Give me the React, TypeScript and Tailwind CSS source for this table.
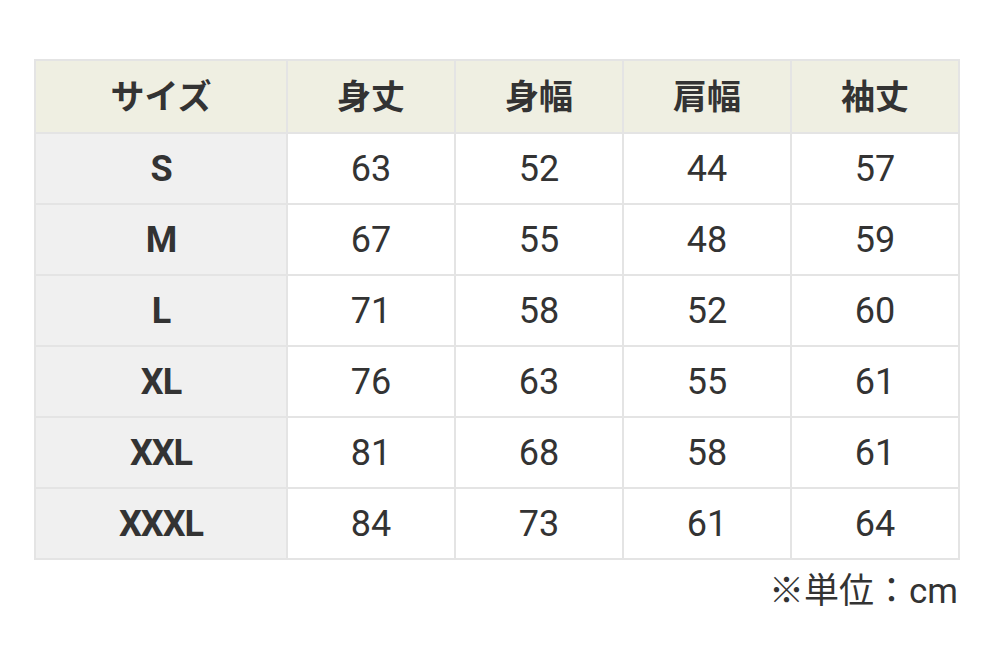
const headers = ['身丈', '身幅', '肩幅', '袖丈']

const rows: { size: string; values: number[] }[] = [
  { size: 'S', values: [63, 52, 44, 57] },
  { size: 'M', values: [67, 55, 48, 59] },
  { size: 'L', values: [71, 58, 52, 60] },
  { size: 'XL', values: [76, 63, 55, 61] },
  { size: 'XXL', values: [81, 68, 58, 61] },
  { size: 'XXXL', values: [84, 73, 61, 64] },
]

export default function App() {
  return (
    <div
      className="w-[992px] h-[653px] bg-white text-[#333333] pt-[59px] pl-[34px]"
      style={{ fontFamily: 'Roboto, "Noto Sans CJK JP", sans-serif' }}
    >
      <table className="w-[924px] border-collapse table-fixed">
        <colgroup>
          <col className="w-[252px]" />
          <col className="w-[168px]" />
          <col className="w-[168px]" />
          <col className="w-[168px]" />
          <col className="w-[168px]" />
        </colgroup>
        <thead>
          <tr className="h-[73px] bg-[#efefe2]">
            <th className="border-2 border-[#e4e4e4] text-[34px] leading-none font-bold text-center">サイズ</th>
            {headers.map((h) => (
              <th key={h} className="border-2 border-[#e4e4e4] text-[34px] leading-none font-bold text-center">
                {h}
              </th>
            ))}
          </tr>
        </thead>
        <tbody>
          {rows.map((row) => (
            <tr key={row.size} className="h-[71px]">
              <td className="border-2 border-[#e4e4e4] bg-[#f0f0f0] text-[36px] leading-none font-bold text-center tracking-[-1px]">
                {row.size}
              </td>
              {row.values.map((v, i) => (
                <td key={i} className="border-2 border-[#e4e4e4] text-[36px] leading-none text-center">
                  {v}
                </td>
              ))}
            </tr>
          ))}
        </tbody>
      </table>
      <p className="w-[924px] text-right text-[35px] mt-[8px] leading-[48px]">※単位：cm</p>
    </div>
  )
}
